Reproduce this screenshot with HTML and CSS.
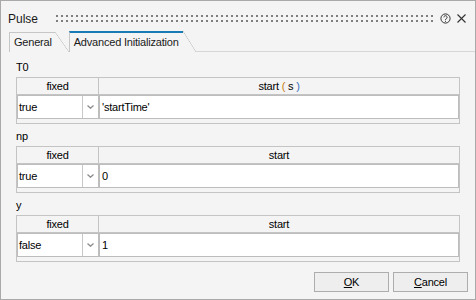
FILE: index.html
```html
<!DOCTYPE html>
<html lang="en">
<head>
    <meta charset="UTF-8">
    <title>Pulse</title>
    <link rel="stylesheet" href="styles.css">
</head>
<body>
    <div class="dialog">
        <div class="titlebar">
            <span class="title">Pulse</span>
            <div class="grip"></div>
            <svg class="help" width="11" height="11" viewBox="0 0 11 11">
                <circle cx="5.5" cy="5.5" r="4.6" fill="none" stroke="#333" stroke-width="1"/>
                <path d="M3.9 4.3a1.6 1.6 0 1 1 2.4 1.4c-.6.3-.8.6-.8 1.3" fill="none" stroke="#333" stroke-width="1"/>
                <rect x="5" y="7.8" width="1" height="1" fill="#333"/>
            </svg>
            <svg class="close" width="9" height="9" viewBox="0 0 9 9">
                <path d="M0.5 0.5L8.5 8.5M8.5 0.5L0.5 8.5" stroke="#333" stroke-width="1.1"/>
            </svg>
        </div>

        <div class="tabs">
            <div class="tab">General</div>
            <div class="tab active">Advanced Initialization</div>
            <div class="tab-fill"></div>
        </div>

        <div class="panel">
            <div class="group">
                <div class="label">T0</div>
                <div class="grid">
                    <div class="head">
                        <div class="h1">fixed</div>
                        <div class="h2">start <span class="po">(</span> <span class="pu">s</span> <span class="pc">)</span></div>
                    </div>
                    <div class="row">
                        <div class="combo">
                            <div class="v">true</div>
                            <div class="arrow"><svg width="7" height="4" viewBox="0 0 7 4"><path d="M0.5 0.5L3.5 3.2L6.5 0.5" fill="none" stroke="#8c8c8c" stroke-width="1.3"/></svg></div>
                        </div>
                        <div class="cell">'startTime'</div>
                    </div>
                    <div class="strip"></div>
                </div>
            </div>

            <div class="group">
                <div class="label">np</div>
                <div class="grid">
                    <div class="head">
                        <div class="h1">fixed</div>
                        <div class="h2">start</div>
                    </div>
                    <div class="row">
                        <div class="combo">
                            <div class="v">true</div>
                            <div class="arrow"><svg width="7" height="4" viewBox="0 0 7 4"><path d="M0.5 0.5L3.5 3.2L6.5 0.5" fill="none" stroke="#8c8c8c" stroke-width="1.3"/></svg></div>
                        </div>
                        <div class="cell">0</div>
                    </div>
                    <div class="strip"></div>
                </div>
            </div>

            <div class="group">
                <div class="label">y</div>
                <div class="grid">
                    <div class="head">
                        <div class="h1">fixed</div>
                        <div class="h2">start</div>
                    </div>
                    <div class="row">
                        <div class="combo">
                            <div class="v">false</div>
                            <div class="arrow"><svg width="7" height="4" viewBox="0 0 7 4"><path d="M0.5 0.5L3.5 3.2L6.5 0.5" fill="none" stroke="#8c8c8c" stroke-width="1.3"/></svg></div>
                        </div>
                        <div class="cell">1</div>
                    </div>
                    <div class="strip"></div>
                </div>
            </div>
        </div>

        <div class="footer">
            <button class="btn"><u>O</u>K</button>
            <button class="btn"><u>C</u>ancel</button>
        </div>
    </div>
</body>
</html>
```

FILE: styles.css
```css
body {
    margin: 0;
    padding: 0;
    background: #f4f4f4;
}

.dialog {
    width: 476px;
    height: 300px;
    box-sizing: border-box;
    border: 1px solid #a9a9a9;
    background: #f4f4f4;
    font-family: 'Liberation Sans', Arial, sans-serif;
    font-size: 11px;
    letter-spacing: -0.2px;
    color: #000;
}

/* title bar */
.titlebar {
    display: flex;
    align-items: flex-start;
    height: 19px;
    padding-top: 11px;
    padding-left: 7px;
}

.title {
    font-size: 12px;
    line-height: 15px;
    letter-spacing: 0;
    color: #1a1a1a;
}

.grip {
    width: 381px;
    height: 7px;
    margin-top: 3px;
    margin-left: 15px;
    background-image:
        linear-gradient(90deg, #f4f4f4 3px, transparent 3px),
        linear-gradient(#7e7e7e 2px, transparent 2px);
    background-size: 5px 5px;
}

.help {
    margin-left: 6px;
    margin-top: 1px;
}

.close {
    margin-left: 6px;
    margin-top: 2px;
}

/* tabs */
.tabs {
    display: flex;
    align-items: flex-end;
    height: 21px;
    padding-left: 8px;
}

.tab {
    position: relative;
    height: 19px;
    line-height: 19px;
    padding: 0 3px 0 4px;
    border-top: 1px solid #c6c6c6;
    border-left: 1px solid #c6c6c6;
    color: #1a1a1a;
}

.tab::after {
    content: '';
    position: absolute;
    top: -1px;
    bottom: 0;
    right: -14px;
    width: 14px;
    background: linear-gradient(to top right, transparent calc(50% - 0.6px), #c6c6c6 50%, transparent calc(50% + 0.6px));
}

.tab.active {
    height: 19px;
    line-height: 18px;
    margin-left: 14px;
    padding-right: 4px;
    border-top: 2px solid #1a7ab3;
}

.tab.active::after {
    top: -2px;
    right: -13px;
    width: 13px;
}

.tab-fill {
    flex: 1;
    margin-left: 13px;
    border-bottom: 1px solid #d6d6d6;
}

/* panel */
.panel {
    padding: 8px 15px 0 15px;
}

.group {
    margin-bottom: 5px;
}

.label {
    line-height: 14px;
    margin-bottom: 3px;
}

.grid {
    border: 1px solid #c4c4c4;
}

.head {
    display: flex;
    height: 16px;
    line-height: 16px;
    border-bottom: 1px solid #c4c4c4;
    text-align: center;
}

.head .h1 {
    width: 81px;
    border-right: 1px solid #c4c4c4;
}

.head .h2 {
    flex: 1;
}

.po {
    color: #c87a10;
}

.pc {
    color: #3a6cc0;
}

.row {
    display: flex;
    height: 24px;
}

.combo {
    display: flex;
    width: 82px;
    box-sizing: border-box;
    border: 1px solid #bdbdbd;
    background: #fff;
}

.combo .v {
    flex: 1;
    line-height: 22px;
    padding-left: 1px;
}

.combo .arrow {
    width: 15px;
    border-left: 1px solid #c8c8c8;
    display: flex;
    align-items: center;
    justify-content: center;
}

.cell {
    flex: 1;
    box-sizing: border-box;
    border: 1px solid #bdbdbd;
    background: #fff;
    line-height: 22px;
    padding-left: 2px;
}

.strip {
    height: 4px;
}

/* buttons */
.footer {
    display: flex;
    justify-content: flex-end;
    gap: 4px;
    padding-top: 5px;
    padding-right: 7px;
}

.btn {
    width: 75px;
    height: 20px;
    padding: 0;
    border: 1px solid #adadad;
    background: #eeeeee;
    font-family: 'Liberation Sans', Arial, sans-serif;
    font-size: 11px;
    letter-spacing: -0.2px;
    color: #000;
}
```
